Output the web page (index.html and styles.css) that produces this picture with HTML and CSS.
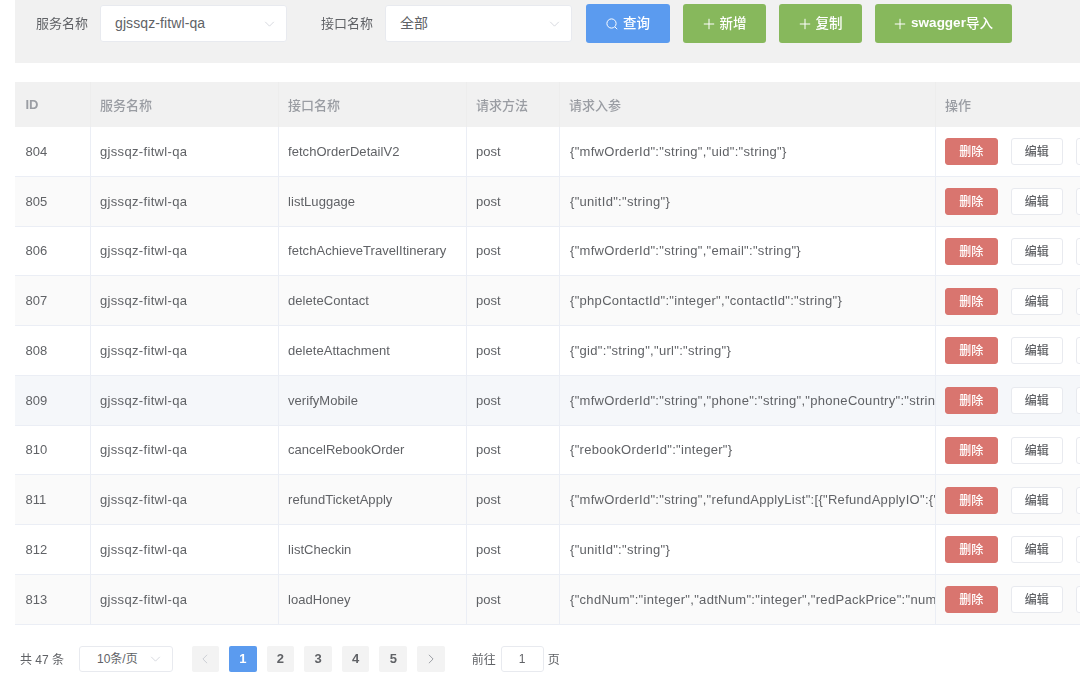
FILE: index.html
```html
<!DOCTYPE html>
<html lang="zh">
<head>
<meta charset="utf-8">
<title>接口管理</title>
<link rel="stylesheet" href="styles.css">
</head>
<body>
<main class="page">
  <form class="toolbar">
    <label class="field-label">服务名称</label>
    <div class="select select-wide"><span>gjssqz-fitwl-qa</span><svg class="chev" viewBox="0 0 12 7"><path d="M1 1l5 5 5-5"/></svg></div>
    <label class="field-label second">接口名称</label>
    <div class="select select-wide"><span>全部</span><svg class="chev" viewBox="0 0 12 7"><path d="M1 1l5 5 5-5"/></svg></div>
    <button type="button" class="btn btn-blue btn-query"><svg class="ico" viewBox="0 0 12 12"><circle cx="5.5" cy="5.5" r="4.6"/><path d="M9 9l2.2 2.2"/></svg>查询</button>
    <button type="button" class="btn btn-green btn-add"><svg class="ico" viewBox="0 0 12 12"><path d="M6 .8v10.4M.8 6h10.4"/></svg>新增</button>
    <button type="button" class="btn btn-green btn-add"><svg class="ico" viewBox="0 0 12 12"><path d="M6 .8v10.4M.8 6h10.4"/></svg>复制</button>
    <button type="button" class="btn btn-green btn-swagger"><svg class="ico" viewBox="0 0 12 12"><path d="M6 .8v10.4M.8 6h10.4"/></svg><b class="latin">swagger</b>导入</button>
  </form>

  <section class="table">
    <div class="row head"><div class="latin">ID</div><div>服务名称</div><div>接口名称</div><div>请求方法</div><div>请求入参</div><div>操作</div></div>
    <div class="row"><div>804</div><div class="svc">gjssqz-fitwl-qa</div><div class="api">fetchOrderDetailV2</div><div>post</div><div class="params">{"mfwOrderId":"string","uid":"string"}</div><div class="ops"><span class="op op-del">删除</span><span class="op">编辑</span><span class="op">详情</span></div></div>
    <div class="row stripe"><div>805</div><div class="svc">gjssqz-fitwl-qa</div><div class="api">listLuggage</div><div>post</div><div class="params">{"unitId":"string"}</div><div class="ops"><span class="op op-del">删除</span><span class="op">编辑</span><span class="op">详情</span></div></div>
    <div class="row"><div>806</div><div class="svc">gjssqz-fitwl-qa</div><div class="api">fetchAchieveTravelItinerary</div><div>post</div><div class="params">{"mfwOrderId":"string","email":"string"}</div><div class="ops"><span class="op op-del">删除</span><span class="op">编辑</span><span class="op">详情</span></div></div>
    <div class="row stripe"><div>807</div><div class="svc">gjssqz-fitwl-qa</div><div class="api">deleteContact</div><div>post</div><div class="params">{"phpContactId":"integer","contactId":"string"}</div><div class="ops"><span class="op op-del">删除</span><span class="op">编辑</span><span class="op">详情</span></div></div>
    <div class="row"><div>808</div><div class="svc">gjssqz-fitwl-qa</div><div class="api">deleteAttachment</div><div>post</div><div class="params">{"gid":"string","url":"string"}</div><div class="ops"><span class="op op-del">删除</span><span class="op">编辑</span><span class="op">详情</span></div></div>
    <div class="row hover"><div>809</div><div class="svc">gjssqz-fitwl-qa</div><div class="api">verifyMobile</div><div>post</div><div class="params">{"mfwOrderId":"string","phone":"string","phoneCountry":"strin</div><div class="ops"><span class="op op-del">删除</span><span class="op">编辑</span><span class="op">详情</span></div></div>
    <div class="row"><div>810</div><div class="svc">gjssqz-fitwl-qa</div><div class="api">cancelRebookOrder</div><div>post</div><div class="params">{"rebookOrderId":"integer"}</div><div class="ops"><span class="op op-del">删除</span><span class="op">编辑</span><span class="op">详情</span></div></div>
    <div class="row stripe"><div>811</div><div class="svc">gjssqz-fitwl-qa</div><div class="api">refundTicketApply</div><div>post</div><div class="params">{"mfwOrderId":"string","refundApplyList":[{"RefundApplyIO":{"</div><div class="ops"><span class="op op-del">删除</span><span class="op">编辑</span><span class="op">详情</span></div></div>
    <div class="row"><div>812</div><div class="svc">gjssqz-fitwl-qa</div><div class="api">listCheckin</div><div>post</div><div class="params">{"unitId":"string"}</div><div class="ops"><span class="op op-del">删除</span><span class="op">编辑</span><span class="op">详情</span></div></div>
    <div class="row stripe"><div>813</div><div class="svc">gjssqz-fitwl-qa</div><div class="api">loadHoney</div><div>post</div><div class="params">{"chdNum":"integer","adtNum":"integer","redPackPrice":"num</div><div class="ops"><span class="op op-del">删除</span><span class="op">编辑</span><span class="op">详情</span></div></div>
  </section>

  <nav class="pager">
    <span class="total">共 47 条</span>
    <div class="select select-size"><span>10条/页</span><svg class="chev" viewBox="0 0 12 7"><path d="M1 1l5 5 5-5"/></svg></div>
    <span class="pg pg-prev"><svg class="arrow" viewBox="0 0 7 12"><path d="M6 1L1 6l5 5"/></svg></span>
    <span class="pg active">1</span><span class="pg">2</span><span class="pg">3</span><span class="pg">4</span><span class="pg">5</span>
    <span class="pg pg-next"><svg class="arrow" viewBox="0 0 7 12"><path d="M1 1l5 5-5 5"/></svg></span>
    <span class="goto">前往</span><span class="page-input">1</span><span class="goto-end">页</span>
  </nav>
</main>
</body>
</html>
```
FILE: styles.css
```css
* { box-sizing: border-box; }
html, body { margin: 0; height: 100%; overflow: hidden; background: #fff; }
body {
  width: 1080px;
  height: 684px;
  font-family: "Liberation Sans", "Noto Sans CJK SC", sans-serif;
  font-size: 13px;
  color: #606266;
}
.page { padding-left: 15px; width: 1080px; filter: blur(0.35px); }

.toolbar {
  height: 63px;
  background: #f1f1f1;
  display: flex;
  align-items: flex-start;
  padding: 5px 0 0 21px;
}
.field-label { line-height: 37px; width: 53px; flex: none; }
.field-label.second { margin-left: 34px; }
.select {
  position: relative;
  background: #fff;
  border: 1px solid #e8eaef;
  border-radius: 3px;
  flex: none;
}
.select-wide {
  width: 187px;
  height: 37px;
  margin-left: 11px;
  line-height: 35px;
  padding-left: 14px;
  font-size: 14px;
  letter-spacing: 0.1px;
  color: #606266;
}
.chev {
  position: absolute;
  right: 11px;
  top: 50%;
  width: 11px;
  height: 6px;
  margin-top: -3px;
  fill: none;
  stroke: #d0d3d9;
  stroke-width: 1;
}
.btn {
  height: 39px;
  margin-top: -1px;
  border: 0;
  border-radius: 3px;
  color: #fff;
  font: inherit;
  font-size: 13.5px;
  font-weight: 500;
  display: flex;
  align-items: center;
  justify-content: center;
  padding: 0 0 3px;
  flex: none;
}
.ico {
  width: 12px;
  height: 12px;
  margin: 3px 5px 0 0;
  fill: none;
  stroke: #fff;
  stroke-width: 1;
}
.latin { font-weight: 700; }
.btn-blue { background: #5b9bef; }
.btn-green { background: #87b85c; }
.btn-query { width: 84px; margin-left: 14px; }
.btn-add { width: 83px; margin-left: 13px; }
.btn-swagger { width: 137px; margin-left: 13px; }

.table { margin-top: 19px; width: 1065px; overflow: hidden; }
.row {
  display: grid;
  grid-template-columns: 76px 188px 188px 93px 376px 215px;
  width: 1136px;
  height: 49.75px;
  border-bottom: 1px solid #ebeef5;
  background: #fff;
}
.row > div {
  display: flex;
  align-items: center;
  padding-left: 9px;
  border-right: 1px solid #ebeef5;
  white-space: nowrap;
  overflow: hidden;
  min-width: 0;
}
.row > div:first-child { padding-left: 10.5px; }
.row > .svc { letter-spacing: 0.33px; }
.row > .api { letter-spacing: 0.05px; }
.row > .params { letter-spacing: 0.3px; padding-left: 10px; }
.head { height: 45px; background: #f1f1f1; border-bottom: 0; color: #9a9da3; font-weight: 500; }
.row.head > div { border-right-color: #ededed; }
.row.head > .latin { font-weight: 700; }
.stripe { background: #fafafa; }
.hover { background: #f5f7fa; }

.row > .ops { gap: 13px; padding-top: 1px; }
.op {
  flex: none;
  width: 52.5px;
  height: 27px;
  line-height: 26px;
  text-align: center;
  border: 1px solid #e8eaef;
  border-radius: 3px;
  background: #fff;
  font-size: 12px;
  font-weight: 500;
  color: #606266;
}
.op-del { background: #d9756f; border-color: #d9756f; color: #fff; }

.pager {
  display: flex;
  align-items: center;
  height: 28px;
  margin-top: 20px;
  padding-left: 5px;
  font-size: 12px;
}
.total { width: 59px; flex: none; }
.select-size {
  width: 94px;
  height: 26px;
  line-height: 24px;
  padding-left: 17px;
}
.pg {
  width: 27.6px;
  height: 26px;
  margin-left: 10px;
  flex: none;
  background: #f3f3f3;
  border-radius: 2px;
  display: flex;
  align-items: center;
  justify-content: center;
  font-size: 13px;
  font-weight: 700;
  color: #606266;
}
.pg-prev { margin-left: 18.5px; }
.active { background: #5b9bef; color: #fff; }
.arrow { width: 6px; height: 10px; fill: none; stroke: #8d9096; stroke-width: 1; }
.pg-prev .arrow { stroke: #c4c8cf; }
.goto { margin-left: 27px; width: 29px; flex: none; }
.page-input {
  width: 43px;
  height: 26px;
  line-height: 24px;
  text-align: center;
  border: 1px solid #e8eaef;
  border-radius: 3px;
  flex: none;
}
.goto-end { margin-left: 4px; }
```
